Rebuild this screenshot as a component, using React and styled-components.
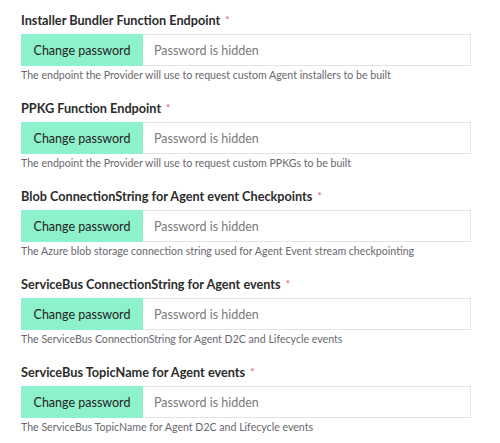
import styled, { createGlobalStyle } from 'styled-components'

const GlobalStyle = createGlobalStyle`
    body {
        margin: 0;
        background: #fff;
        font-family: Lato, "Open Sans", sans-serif;
    }
`;

const Form = styled.div`
    display: flex;
    flex-direction: column;
    padding: 10px 29px 0 21px;
`;

const Field = styled.div`
    display: flex;
    flex-direction: column;
    margin-bottom: 16px;
`;

const Label = styled.label`
    display: block;
    height: 20px;
    font-size: 12.7px;
    font-weight: 700;
    line-height: 20px;
    color: #2b2b2b;
    margin-bottom: 4px;
`;

const Required = styled.span`
    color: #e8678e;
    font-size: 10px;
    line-height: 0;
    margin-left: 5px;
    vertical-align: 2px;
`;

const InputGroup = styled.div`
    display: flex;
    height: 32px;
`;

const ChangeButton = styled.button`
    width: 122px;
    flex: none;
    border: none;
    background: #8df1cb;
    color: #222;
    font-family: inherit;
    font-size: 12.5px;
    padding: 0;
    cursor: pointer;
`;

const Hidden = styled.div`
    flex: 1;
    display: flex;
    align-items: center;
    padding-left: 11px;
    border: 1px solid #e3e3e8;
    border-left: none;
    color: #7a7a7a;
    font-size: 12.5px;
`;

const Help = styled.div`
    margin-top: 3px;
    height: 13px;
    font-size: 10.6px;
    line-height: 13px;
    color: #68686d;
`;

const fields = [
    ['Installer Bundler Function Endpoint', 'The endpoint the Provider will use to request custom Agent installers to be built'],
    ['PPKG Function Endpoint', 'The endpoint the Provider will use to request custom PPKGs to be built'],
    ['Blob ConnectionString for Agent event Checkpoints', 'The Azure blob storage connection string used for Agent Event stream checkpointing'],
    ['ServiceBus ConnectionString for Agent events', 'The ServiceBus ConnectionString for Agent D2C and Lifecycle events'],
    ['ServiceBus TopicName for Agent events', 'The ServiceBus TopicName for Agent D2C and Lifecycle events'],
];

const App = () => {
    return (
        <>
            <GlobalStyle />
            <Form>
                {fields.map(([label, help]) => (
                    <Field key={label}>
                        <Label>{label}<Required>*</Required></Label>
                        <InputGroup>
                            <ChangeButton>Change password</ChangeButton>
                            <Hidden>Password is hidden</Hidden>
                        </InputGroup>
                        <Help>{help}</Help>
                    </Field>
                ))}
            </Form>
        </>
    )
}

export default App;
